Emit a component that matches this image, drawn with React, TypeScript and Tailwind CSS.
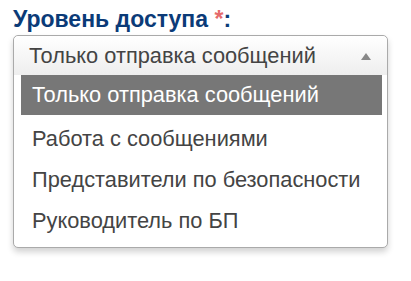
import React from 'react';

const options = [
  'Только отправка сообщений',
  'Работа с сообщениями',
  'Представители по безопасности',
  'Руководитель по БП',
];

const App: React.FC = () => {
  const selected = 0;

  return (
    <div className="min-h-screen bg-white px-[13px] pt-[6px] font-['Liberation_Sans',Arial,sans-serif]">
      <label className="block text-[23px] font-bold leading-[26px] text-[#0b3b78]">
        Уровень доступа <span className="text-[#e56b6b]">*</span>:
      </label>

      <div className="mt-[3px] w-[375px] rounded-[5px] border border-[#aaa] bg-white shadow-[0_4px_6px_rgba(0,0,0,0.18)]">
        {/* current value */}
        <div className="flex h-[39px] items-center justify-between rounded-t-[5px] bg-gradient-to-b from-white to-[#eee] pl-[15px] pr-[16px]">
          <span className="text-[21.8px] leading-[24px] text-[#444]">{options[selected]}</span>
          <svg width="10" height="7" viewBox="0 0 10 7" className="mt-[1px]">
            <path d="M5 0 L10 7 L0 7 Z" fill="#888" />
          </svg>
        </div>

        {/* option list */}
        <ul className="ml-[7px] mr-[5px] pb-[6px]">
          {options.map((opt, i) => (
            <li
              key={opt}
              className={
                i === selected
                  ? 'mb-[3px] flex h-[40px] items-center bg-[#777] pl-[11px] text-[21.8px] leading-[24px] text-white'
                  : 'flex h-[41px] items-center pl-[11px] text-[21.8px] leading-[24px] text-[#444]'
              }
            >
              {opt}
            </li>
          ))}
        </ul>
      </div>
    </div>
  );
};

export default App;
